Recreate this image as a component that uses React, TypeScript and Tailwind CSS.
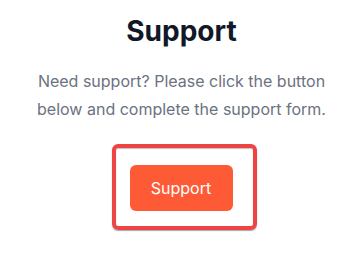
export default function App() {
  return (
    <div className="min-h-screen bg-white flex flex-col items-center pt-[13px] font-['Inter','Liberation_Sans',sans-serif]">
      <h1 className="text-[28px] leading-[36px] font-bold text-[#111827] pl-[2px]">Support</h1>
      <p className="mt-[18px] text-[16px] leading-[28px] text-[#6b7280] text-center pl-[2px]">
        Need support? Please click the button
        <br />
        below and complete the support form.
      </p>
      <div className="mt-[21px] ml-[7px] rounded-[6px] border-4 border-[#ef4444] pl-[14px] pr-[20px] pt-[17px] pb-[15px] shadow-[inset_0_1px_1px_rgba(0,0,0,0.25),0_1px_1px_rgba(0,0,0,0.35)]">
        <button className="h-[46px] w-[103px] rounded-[6px] bg-[#ff5a36] text-[16px] text-white">
          Support
        </button>
      </div>
    </div>
  );
}
